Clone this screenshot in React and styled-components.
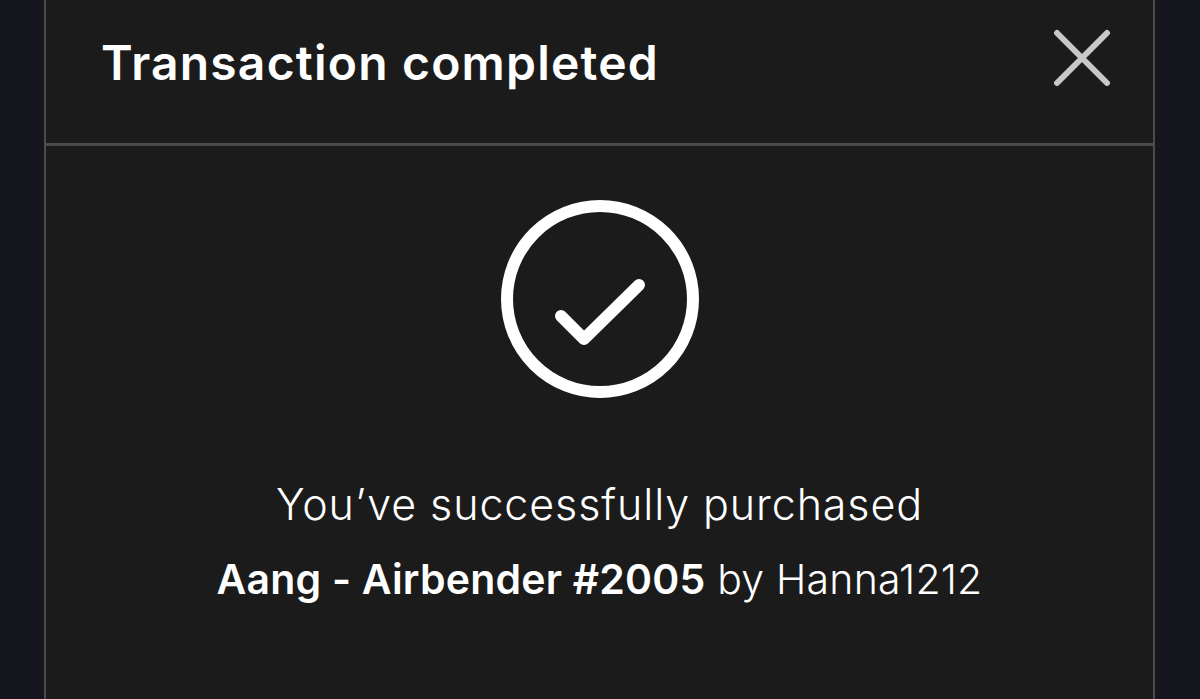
import React from 'react'
import styled, { createGlobalStyle } from 'styled-components'

const GlobalStyle = createGlobalStyle`
  html, body {
    margin: 0;
    padding: 0;
    background: #16171e;
    height: 100%;
    overflow: hidden;
  }
  body {
    font-family: Inter, "Open Sans", sans-serif;
    color: #fff;
  }
`

const Page = styled.div`
  height: 699px;
  padding-left: 44px;
  box-sizing: border-box;
`

const Panel = styled.div`
  width: 1111px;
  height: 100%;
  box-sizing: border-box;
  background: #1b1b1b;
  border-left: 2px solid #4b4b4b;
  border-right: 2px solid #4b4b4b;
  display: flex;
  flex-direction: column;
`

const Header = styled.div`
  height: 146px;
  box-sizing: border-box;
  border-bottom: 3px solid #4b4b4b;
  display: flex;
  align-items: center;
  justify-content: space-between;
  padding: 0 42px 18px 55px;
`

const Title = styled.h1`
  margin: 0;
  font-size: 48px;
  font-weight: 600;
  letter-spacing: 1.2px;
`

const CloseButton = styled.button`
  background: none;
  border: 0;
  padding: 0;
  margin-bottom: 10px;
  width: 58px;
  height: 58px;
  cursor: pointer;
  display: flex;
  align-items: center;
  justify-content: center;
`

const Body = styled.div`
  display: flex;
  flex-direction: column;
  align-items: center;
  padding-top: 53px;
`

const Message = styled.div`
  margin-top: 68px;
  text-align: center;
  font-weight: 300;
`

const Line = styled.div`
  font-size: ${p => p.$size}px;
  letter-spacing: ${p => p.$spacing}px;
  line-height: 75px;
`

const Strong = styled.span`
  font-weight: 600;
`

export default function App() {
  return (
    <>
      <GlobalStyle />
      <Page>
        <Panel>
          <Header>
            <Title>Transaction completed</Title>
            <CloseButton aria-label="Close">
              <svg width="58" height="58" viewBox="0 0 58 58">
                <path d="M4 4 L54 54 M54 4 L4 54" stroke="#c8c8c8" strokeWidth="6" strokeLinecap="round" />
              </svg>
            </CloseButton>
          </Header>
          <Body>
            <svg width="200" height="200" viewBox="0 0 200 200">
              <circle cx="100" cy="100" r="93" fill="none" stroke="#fff" strokeWidth="12" />
              <path d="M61 117 L84 140 L139 86" fill="none" stroke="#fff" strokeWidth="12" strokeLinecap="round" strokeLinejoin="round" />
            </svg>
            <Message>
              <Line $size={43} $spacing={0.9}>You’ve successfully purchased</Line>
              <Line $size={41} $spacing={0.2}>
                <Strong>Aang - Airbender #2005</Strong> by Hanna1212
              </Line>
            </Message>
          </Body>
        </Panel>
      </Page>
    </>
  )
}
